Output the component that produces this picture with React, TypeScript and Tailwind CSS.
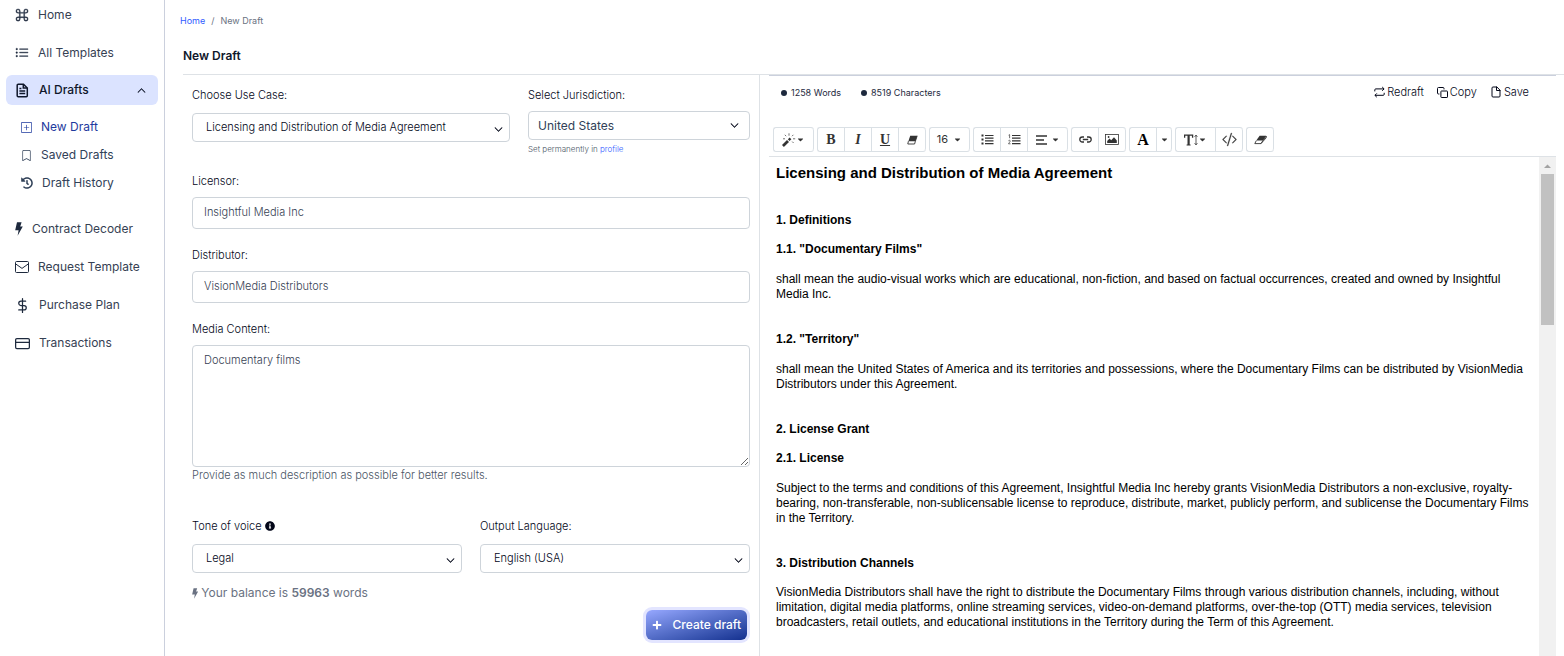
import { useState } from "react";
import type { ReactNode } from "react";
import {
  BsBookmark,
  BsChevronDown,
  BsChevronUp,
  BsCodeSlash,
  BsCommand,
  BsListUl,
  BsPlusSquare,
} from "react-icons/bs";
import { FaCaretDown, FaHistory, FaInfoCircle, FaPlus } from "react-icons/fa";
import { FiCreditCard, FiDollarSign, FiFile } from "react-icons/fi";

function FileTextIcon() {
  return (
    <svg width="14" height="15" viewBox="0 0 14 15" fill="none" stroke="currentColor" strokeWidth="1.5">
      <path d="M8.5 1.2H3.2a1 1 0 0 0-1 1v10.6a1 1 0 0 0 1 1h8.1a1 1 0 0 0 1-1V5Z" />
      <path d="M8.3 1.2V5h4M4.4 5.4h2M4.4 8h5.8M4.4 10.6h5.8" />
    </svg>
  );
}

function BoltIcon({ size }: { size: number }) {
  return (
    <svg width={(size * 8) / 14} height={size} viewBox="0 0 8 14" fill="currentColor">
      <path d="M2 .3h4.6L5.2 4.6h2.6L2.6 13.8l1-5.6H.2Z" />
    </svg>
  );
}

function EnvelopeIcon() {
  return (
    <svg width="14" height="12" viewBox="0 0 14 12" fill="none" stroke="currentColor">
      <rect x="0.5" y="0.5" width="13" height="11" rx="1" />
      <path d="M.8 3 7 7.4 13.2 3" />
    </svg>
  );
}

function RepeatIcon() {
  return (
    <svg width="11" height="12" viewBox="0 0 11 12" fill="none" stroke="currentColor" strokeWidth="1">
      <path d="M.8 5.4V3.9a1 1 0 0 1 1-1h8.2M8.2 1l1.9 1.9-1.9 1.9M10.2 6.8v1.5a1 1 0 0 1-1 1H1M2.8 7.4 .9 9.3l1.9 1.9" />
    </svg>
  );
}

function CopyIcon() {
  return (
    <svg width="11" height="11" viewBox="0 0 11 11" fill="none" stroke="currentColor" strokeWidth="1">
      <rect x="3.9" y="4" width="6.6" height="6.5" rx="0.6" />
      <path d="M2.4 7H1.5a1 1 0 0 1-1-1V1.5a1 1 0 0 1 1-1H6a1 1 0 0 1 1 1v.9" />
    </svg>
  );
}

function WandIcon() {
  return (
    <svg width="14" height="14" viewBox="0 0 14 14" fill="none" stroke="currentColor">
      <path d="M.9 13 6 7.9" strokeWidth="2.8" />
      <path d="M6.7 7.2 8.5 5.4" strokeWidth="2.4" />
      <path d="M7 .3v2.4M2.8 1.8l1.4 1.4M11.4 1.8 10 3.2M1 5.8h2M11 5.8h2.2M10.2 8.6l1.4 1.4" strokeWidth="0.7" />
    </svg>
  );
}

function HighlightIcon() {
  return (
    <svg width="11" height="10" viewBox="0 0 11 10">
      <path d="M3.2.8h7L8.4 6.2H1.4Z" fill="currentColor" />
      <path d="M1.4 6.2.8 9h6.8l.8-2.8 1.8-5.4" fill="none" stroke="currentColor" strokeWidth="0.9" />
    </svg>
  );
}

function ClearIcon() {
  return (
    <svg width="13" height="10" viewBox="0 0 13 10">
      <path d="M5.6.8h6.6L8.9 5.6H2.3Z" fill="currentColor" />
      <path d="M2.3 5.6.8 8.6h6.2l1.9-3 3.3-4.6v1.8L7 8.6" fill="none" stroke="currentColor" strokeWidth="0.9" />
    </svg>
  );
}

function BulletListIcon() {
  return (
    <svg width="13" height="11" viewBox="0 0 13 11" fill="none" stroke="currentColor" strokeWidth="1.5">
      <path d="M4 1.5h8.5M4 4.2h8.5M4 6.9h8.5M4 9.6h8.5" strokeWidth="1.2" />
      <path d="M.5 1.5h2M.5 5.5h2M.5 9.5h2" strokeWidth="2" />
    </svg>
  );
}

function NumberListIcon() {
  return (
    <svg width="13" height="11" viewBox="0 0 13 11" fill="none" stroke="currentColor">
      <path d="M4 1.5h8.5M4 4.2h8.5M4 6.9h8.5M4 9.6h8.5" strokeWidth="1.2" />
      <path d="M.6 1.2 1.6.6v3.6M.4 6.8c.6-.9 2-.6 1.8.4C2.1 8 .8 8.8.5 9.8h2" strokeWidth="0.7" />
    </svg>
  );
}

function AlignIcon() {
  return (
    <svg width="12" height="10" viewBox="0 0 12 10" stroke="currentColor" strokeWidth="1.4">
      <path d="M0 1h11M0 5h8M0 9h11" />
    </svg>
  );
}

function ChainIcon() {
  return (
    <svg width="13" height="7" viewBox="0 0 13 7" fill="none" stroke="currentColor" strokeWidth="1.3">
      <path d="M5 6H3.3a2.5 2.5 0 0 1 0-5H5M8 1h1.7a2.5 2.5 0 0 1 0 5H8M3.8 3.5h5.4" />
    </svg>
  );
}

function PictureIcon() {
  return (
    <svg width="14" height="11" viewBox="0 0 14 11">
      <rect x="0.5" y="0.5" width="13" height="10" fill="none" stroke="currentColor" strokeWidth="0.8" />
      <path d="M2.2 9V7l2.3-2.4 1.7 1.6L9 3.2l2.8 3.4V9Z" fill="currentColor" />
      <circle cx="3.6" cy="3" r="0.9" fill="currentColor" />
    </svg>
  );
}

function TextHeightIcon() {
  return (
    <svg width="14" height="12" viewBox="0 0 14 12" fill="none" stroke="currentColor">
      <path d="M.6 3.8V1.1h8v2.7" strokeWidth="1.3" />
      <path d="M4.6 1v10" strokeWidth="2.2" />
      <path d="M2.6 11h4" strokeWidth="1" />
      <path d="M12 1.2v9.6M10.6 2.8 12 1.1l1.4 1.7M10.6 9.2l1.4 1.7 1.4-1.7" strokeWidth="0.8" />
    </svg>
  );
}

interface NavItemProps {
  icon: ReactNode;
  label: string;
}

function NavItem({ icon, label }: NavItemProps) {
  return (
    <a href="#" className="flex h-[30px] items-center gap-[9px] pl-[15px] text-gray-700">
      <span className="text-slate-800">{icon}</span>
      {label}
    </a>
  );
}

function SubItem({ icon, label, active = false }: NavItemProps & { active?: boolean }) {
  return (
    <a
      href="#"
      className={`flex h-7 items-center gap-[9px] pl-[21px] ${active ? "text-[#1e3a9e]" : "text-slate-700"}`}
    >
      {icon}
      {label}
    </a>
  );
}

function Sidebar() {
  return (
    <aside className="w-[165px] shrink-0 border-r border-[#cbd0dd] text-xs">
      <nav>
        <div className="flex flex-col gap-2">
          <NavItem icon={<BsCommand size={14} strokeWidth={0.4} />} label="Home" />
          <NavItem icon={<BsListUl size={14} strokeWidth={0.4} />} label="All Templates" />
        </div>
        <div className="mt-[7px]">
          <button
            type="button"
            className="mx-[6px] mb-2 flex h-[30px] w-[152px] items-center gap-[10px] rounded-md bg-[#dbe3ff] pr-3 pl-[9px] font-medium text-slate-900"
          >
            <FileTextIcon />
            AI Drafts
            <BsChevronUp size={9} strokeWidth={0.8} className="ml-auto" />
          </button>
          <SubItem icon={<BsPlusSquare size={11} />} label="New Draft" active />
          <SubItem icon={<BsBookmark size={11} />} label="Saved Drafts" />
          <SubItem icon={<FaHistory size={12} />} label="Draft History" />
        </div>
        <div className="mt-[17px] flex flex-col gap-2">
          <NavItem icon={<BoltIcon size={14} />} label="Contract Decoder" />
          <NavItem icon={<EnvelopeIcon />} label="Request Template" />
          <NavItem icon={<FiDollarSign size={15} />} label="Purchase Plan" />
          <NavItem icon={<FiCreditCard size={15} />} label="Transactions" />
        </div>
      </nav>
    </aside>
  );
}

interface SelectFieldProps {
  id: string;
  label: ReactNode;
  options: string[];
  large?: boolean;
}

function SelectField({ id, label, options, large = false }: SelectFieldProps) {
  return (
    <div>
      <label htmlFor={id} className="flex h-4 items-center gap-[3px] text-[11px]">
        {label}
      </label>
      <div className={`relative ${large ? "mt-2" : "mt-[10px]"}`}>
        <select
          id={id}
          className={`h-[29px] w-full appearance-none rounded border border-[#ced4da] bg-white ${
            large ? "px-[9px] text-xs font-normal text-slate-700" : "px-[13px] text-[11px]"
          }`}
        >
          {options.map((option) => (
            <option key={option}>{option}</option>
          ))}
        </select>
        <BsChevronDown
          size={9}
          strokeWidth={0.8}
          className={`pointer-events-none absolute ${large ? "top-[10px] right-[11px]" : "top-3 right-[7px]"}`}
        />
      </div>
    </div>
  );
}

function TextField({ id, label, value }: { id: string; label: string; value: string }) {
  return (
    <div>
      <label htmlFor={id} className="block h-4 text-[11px] leading-4">
        {label}
      </label>
      <input
        id={id}
        type="text"
        defaultValue={value}
        className="mt-2 block h-8 w-full rounded border border-[#ced4da] px-[11px] pb-0.5 text-[11px] text-gray-700"
      />
    </div>
  );
}

function DraftForm() {
  return (
    <form className="w-[577px] shrink-0 border-r border-[#dee2e6] px-[9px] pt-3 font-light text-slate-950">
      <div className="flex gap-[18px]">
        <div className="flex-1">
          <SelectField
            id="use-case"
            label="Choose Use Case:"
            options={["Licensing and Distribution of Media Agreement"]}
          />
        </div>
        <div className="w-[222px]">
          <SelectField id="jurisdiction" label="Select Jurisdiction:" options={["United States"]} large />
          <p className="mt-1 text-[8px] leading-[10px] text-gray-600">
            Set permanently in{" "}
            <a href="#" className="text-[#2f5bff]">
              profile
            </a>
          </p>
        </div>
      </div>

      <div className="mt-[19px] flex flex-col gap-[18px]">
        <TextField id="licensor" label="Licensor:" value="Insightful Media Inc" />
        <TextField id="distributor" label="Distributor:" value="VisionMedia Distributors" />
        <div>
          <label htmlFor="media-content" className="block h-4 text-[11px] leading-4">
            Media Content:
          </label>
          <textarea
            id="media-content"
            defaultValue="Documentary films"
            className="mt-2 block h-[122px] w-full resize-y rounded border border-[#ced4da] px-[11px] py-1.5 text-[11px] text-gray-700"
          />
          <p className="text-[11px] leading-4 text-gray-600">
            Provide as much description as possible for better results.
          </p>
        </div>
      </div>

      <div className="mt-[35px] grid grid-cols-2 gap-[18px]">
        <SelectField
          id="tone"
          label={
            <>
              Tone of voice <FaInfoCircle size={10} />
            </>
          }
          options={["Legal"]}
        />
        <SelectField id="language" label="Output Language:" options={["English (USA)"]} />
      </div>

      <p className="mt-[11px] flex h-[18px] items-center gap-[3px] text-xs font-normal text-gray-500">
        <BoltIcon size={11} />
        <span>
          Your balance is <b className="font-semibold">59963</b> words
        </span>
      </p>
      <div className="mt-2 flex justify-end pr-[3px]">
        <button
          type="button"
          className="flex h-[30px] w-[101px] items-center justify-between rounded-md bg-linear-to-br from-[#97a8ff] to-[#14308f] px-[6px] text-xs font-medium whitespace-nowrap text-white ring-3 ring-[#e3e5ff]"
        >
          <FaPlus size={10} />
          Create draft
        </button>
      </div>
    </form>
  );
}

function ToolGroup({ children }: { children: ReactNode }) {
  return <div className="flex h-[25px] rounded-[3px] border-y border-l border-[#dae0e5]">{children}</div>;
}

interface ToolProps {
  label: string;
  width?: string;
  caret?: boolean;
  children?: ReactNode;
}

function Tool({ label, width = "w-[27px]", caret = false, children }: ToolProps) {
  return (
    <button
      type="button"
      aria-label={label}
      className={`flex ${width} items-center justify-center border-r border-[#dae0e5] text-[11px] text-[#333] last:rounded-r-[3px]`}
    >
      {children}
      {caret && <FaCaretDown size={9} />}
    </button>
  );
}

function Toolbar() {
  return (
    <div className="flex gap-[3px] border-b border-[#dee2e6] px-1 pb-1">
      <ToolGroup>
        <Tool label="Style" width="w-10" caret>
          <WandIcon />
        </Tool>
      </ToolGroup>
      <ToolGroup>
        <Tool label="Bold">
          <span className='font-["Liberation_Serif",serif] text-sm font-bold'>B</span>
        </Tool>
        <Tool label="Italic">
          <span className='font-["Liberation_Serif",serif] text-sm font-bold italic'>I</span>
        </Tool>
        <Tool label="Underline">
          <span className='font-["Liberation_Serif",serif] text-sm font-bold underline'>U</span>
        </Tool>
        <Tool label="Remove formatting">
          <HighlightIcon />
        </Tool>
      </ToolGroup>
      <ToolGroup>
        <Tool label="Font size" width="w-10" caret>
          <span className="pr-[5px]">16</span>
        </Tool>
      </ToolGroup>
      <ToolGroup>
        <Tool label="Unordered list">
          <BulletListIcon />
        </Tool>
        <Tool label="Ordered list">
          <NumberListIcon />
        </Tool>
        <Tool label="Paragraph" width="w-10" caret>
          <span className="pr-[3px]">
            <AlignIcon />
          </span>
        </Tool>
      </ToolGroup>
      <ToolGroup>
        <Tool label="Link">
          <ChainIcon />
        </Tool>
        <Tool label="Picture">
          <PictureIcon />
        </Tool>
      </ToolGroup>
      <ToolGroup>
        <Tool label="Text colour">
          <span className='font-["Liberation_Serif",serif] text-base font-bold text-black'>A</span>
        </Tool>
        <Tool label="More colours" width="w-[15px]" caret />
      </ToolGroup>
      <ToolGroup>
        <Tool label="Line height" width="w-10" caret>
          <TextHeightIcon />
        </Tool>
        <Tool label="Code view">
          <BsCodeSlash size={15} strokeWidth={0.3} />
        </Tool>
      </ToolGroup>
      <ToolGroup>
        <Tool label="Clear">
          <ClearIcon />
        </Tool>
      </ToolGroup>
    </div>
  );
}

function Count({ children }: { children: ReactNode }) {
  return (
    <span className="flex items-center gap-1">
      <span className="h-1.5 w-1.5 rounded-full bg-slate-800" />
      {children}
    </span>
  );
}

function Action({ icon, label }: NavItemProps) {
  return (
    <button type="button" className="flex items-center gap-0.5">
      {icon}
      {label}
    </button>
  );
}

const clauses = [
  {
    title: "1. Definitions",
    parts: [
      {
        title: '1.1. "Documentary Films"',
        text: "shall mean the audio-visual works which are educational, non-fiction, and based on factual occurrences, created and owned by Insightful Media Inc.",
      },
      {
        title: '1.2. "Territory"',
        text: "shall mean the United States of America and its territories and possessions, where the Documentary Films can be distributed by VisionMedia Distributors under this Agreement.",
      },
    ],
  },
  {
    title: "2. License Grant",
    parts: [
      {
        title: "2.1. License",
        text: "Subject to the terms and conditions of this Agreement, Insightful Media Inc hereby grants VisionMedia Distributors a non-exclusive, royalty-bearing, non-transferable, non-sublicensable license to reproduce, distribute, market, publicly perform, and sublicense the Documentary Films in the Territory.",
      },
    ],
  },
  {
    title: "3. Distribution Channels",
    parts: [
      {
        title: "",
        text: "VisionMedia Distributors shall have the right to distribute the Documentary Films through various distribution channels, including, without limitation, digital media platforms, online streaming services, video-on-demand platforms, over-the-top (OTT) media services, television broadcasters, retail outlets, and educational institutions in the Territory during the Term of this Agreement.",
      },
    ],
  },
];

function Agreement() {
  return (
    <article className='min-w-0 flex-1 overflow-hidden px-[7px] pt-[7px] font-["Liberation_Sans",Arial,sans-serif] text-xs leading-[15px] text-black'>
      <h1 className="mb-[31px] text-[15px] leading-[18px] font-bold">Licensing and Distribution of Media Agreement</h1>
      {clauses.map((clause) => (
        <section key={clause.title}>
          <h2 className="mb-[14px] font-bold">{clause.title}</h2>
          {clause.parts.map((part) => (
            <div key={part.text} className="mb-[30px]">
              {part.title && <h3 className="mb-[15px] font-bold">{part.title}</h3>}
              <p>{part.text}</p>
            </div>
          ))}
        </section>
      ))}
    </article>
  );
}

function Editor() {
  const [words] = useState(1258);
  const [characters] = useState(8519);

  return (
    <section className="mr-2 ml-[9px] flex min-w-0 flex-1 flex-col border-t border-[#cbd0dd]">
      <div className="mb-[26px] flex h-[25px] items-end justify-between pr-[27px] pl-3">
        <div className="flex h-4 items-center gap-5 text-[9px]">
          <Count>{words} Words</Count>
          <Count>{characters} Characters</Count>
        </div>
        <div className="flex h-[18px] items-center gap-[13px] text-[11px] font-light text-slate-950">
          <Action icon={<RepeatIcon />} label="Redraft" />
          <Action icon={<CopyIcon />} label="Copy" />
          <Action icon={<FiFile size={12} />} label="Save" />
        </div>
      </div>
      <Toolbar />
      <div className="flex min-h-0 flex-1">
        <Agreement />
        <div className="flex w-[17px] shrink-0 flex-col items-center bg-[#f1f1f1]">
          <svg width="7" height="17" viewBox="0 0 7 17">
            <path d="M0 11 3.5 7.5 7 11Z" fill="#a3a3a3" />
          </svg>
          <div className="h-[151px] w-[13px] bg-[#c1c1c1]" />
        </div>
      </div>
    </section>
  );
}

export default function App() {
  return (
    <div className="flex h-screen overflow-hidden bg-white font-[Inter,sans-serif] text-slate-800">
      <Sidebar />
      <main className="flex min-w-0 flex-1 flex-col">
        <nav aria-label="Breadcrumb" className="flex h-[41px] items-center gap-1.5 pl-[15px] text-[9px]">
          <a href="#" className="text-[#2f5bff]">
            Home
          </a>
          <span className="text-gray-500">/</span>
          <span className="text-gray-500">New Draft</span>
        </nav>
        <div className="ml-[18px] flex h-[34px] items-center border-b border-[#dee2e6] pb-1">
          <h1 className="text-xs font-semibold text-slate-900">New Draft</h1>
        </div>
        <div className="flex min-h-0 flex-1 pl-[18px]">
          <DraftForm />
          <Editor />
        </div>
      </main>
    </div>
  );
}
